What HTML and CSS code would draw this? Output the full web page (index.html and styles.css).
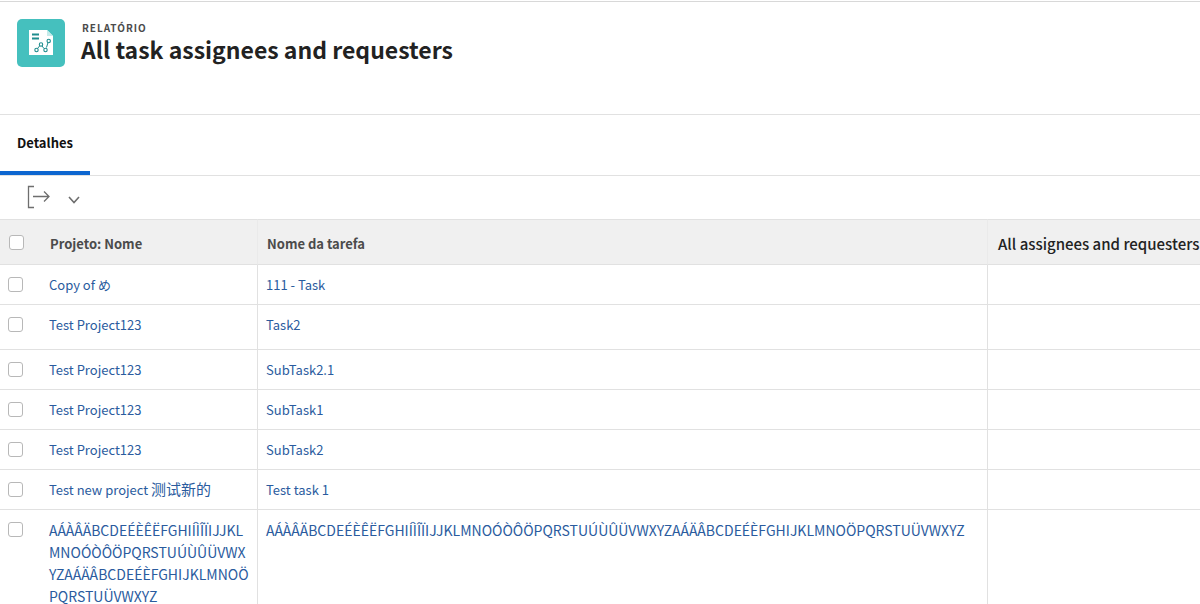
FILE: index.html
```html
<!DOCTYPE html>
<html lang="pt">
<head>
<meta charset="utf-8">
<meta name="viewport" content="width=device-width, initial-scale=1">
<title>All task assignees and requesters</title>
<link rel="stylesheet" href="styles.css">
</head>
<body>
<header class="page-header">
  <svg class="report-icon" viewBox="0 0 48 48" aria-hidden="true">
    <rect width="48" height="48" rx="5" fill="#45c0be"/>
    <path d="M12 11h18l6 6v19H12z" fill="#fff"/>
    <path d="M30 11l6 6h-6z" fill="#c5ebea"/>
    <path d="M15 15.500h7M15 19.500h7" stroke="#1f8c8e" stroke-width="2"/>
    <path d="M20.500 29.500l2.500-3M25 27l2 2.500M29.500 28.500l1.500-5" stroke="#1f8c8e" fill="none"/>
    <g fill="#fff" stroke="#1f8c8e" stroke-width="1.100"><circle cx="19.500" cy="31" r="1.700"/><circle cx="24" cy="25.500" r="1.700"/><circle cx="28.500" cy="31" r="1.700"/><circle cx="31.700" cy="22" r="1.700"/></g>
  </svg>
  <div class="heading">
    <p class="kind">RELATÓRIO</p>
    <h1 class="title">All task assignees and requesters</h1>
  </div>
</header>
<nav class="tabs"><a class="tab" href="#details" aria-current="page">Detalhes</a></nav>
<main id="details">
  <div class="toolbar">
    <button class="export" type="button" aria-label="Exportar">
      <svg class="export-icon" viewBox="0 0 24 24" aria-hidden="true"><path d="M7 1.500H1.500v21H7M6 11.500h16M17 6.500l5 5-5 5"/></svg>
      <svg class="chevron" viewBox="0 0 12 8" aria-hidden="true"><path d="M1 1l5 5.500 5-5.500"/></svg>
    </button>
  </div>
  <div class="table-wrap">
  <table class="report">
    <colgroup><col class="col-check"><col class="col-project"><col class="col-task"><col class="col-people"></colgroup>
    <thead><tr><th><input type="checkbox" aria-label="Selecionar tudo"></th><th>Projeto: Nome</th><th>Nome da tarefa</th><th class="people">All assignees and requesters</th></tr></thead>
    <tbody>
      <tr><td><input type="checkbox" aria-label="111 - Task"></td><td><a href="#p1">Copy of め</a></td><td><a href="#t1">111 - Task</a></td><td></td></tr>
      <tr class="tall"><td><input type="checkbox" aria-label="Task2"></td><td><a href="#p2">Test Project123</a></td><td><a href="#t2">Task2</a></td><td></td></tr>
      <tr><td><input type="checkbox" aria-label="SubTask2.1"></td><td><a href="#p2">Test Project123</a></td><td><a href="#t3">SubTask2.1</a></td><td></td></tr>
      <tr><td><input type="checkbox" aria-label="SubTask1"></td><td><a href="#p2">Test Project123</a></td><td><a href="#t4">SubTask1</a></td><td></td></tr>
      <tr><td><input type="checkbox" aria-label="SubTask2"></td><td><a href="#p2">Test Project123</a></td><td><a href="#t5">SubTask2</a></td><td></td></tr>
      <tr><td><input type="checkbox" aria-label="Test task 1"></td><td><a href="#p3">Test new project <span class="han" lang="zh-Hans">测试新的</span></a></td><td><a href="#t6">Test task 1</a></td><td></td></tr>
      <tr class="long"><td><input type="checkbox" aria-label="AÁÀÂÄ"></td><td><a href="#p4">AÁÀÂÄBCDEÉÈÊËFGHIÍÌÎÏIJJKLMNOÓÒÔÖPQRSTUÚÙÛÜVWXYZAÁÄÂBCDEÉÈFGHIJKLMNOÖPQRSTUÜVWXYZ</a></td><td><a href="#t7">AÁÀÂÄBCDEÉÈÊËFGHIÍÌÎÏIJJKLMNOÓÒÔÖPQRSTUÚÙÛÜVWXYZAÁÄÂBCDEÉÈFGHIJKLMNOÖPQRSTUÜVWXYZ</a></td><td></td></tr>
    </tbody>
  </table>
  </div>
</main>
</body>
</html>
```

FILE: styles.css
```css
* { box-sizing: border-box; }
html { height: 100%; overflow: hidden; }
body {
  margin: 0;
  background: #fff;
  color: #222;
  font: 13px/22px "Noto Sans CJK JP", "Noto Sans", sans-serif;
}
.page-header {
  display: flex;
  gap: 16px;
  padding: 17px 17px 47px;
  border-top: 1px solid #d8d8d8;
  margin-top: 1px;
  border-bottom: 1px solid #e1e1e1;
}
.report-icon { width: 48px; height: 48px; flex: none; }
.kind {
  margin: 0;
  padding-left: 1px;
  color: #4b4b4b;
  font-size: 10px;
  font-weight: 700;
  line-height: 17px;
  letter-spacing: 1px;
}
.title { margin: 0; font-size: 23px; font-weight: 700; line-height: 26px; }
.tabs { display: flex; border-bottom: 1px solid #e1e1e1; }
.tab {
  padding: 17px 17px 17px;
  border-bottom: 4px solid #0d66d0;
  color: #111;
  font-weight: 700;
  text-decoration: none;
}
.toolbar { padding: 9px 27px 10px; }
.export {
  display: flex;
  align-items: center;
  gap: 17px;
  padding: 0;
  border: 0;
  background: none;
}
.export svg { fill: none; stroke: #6e6e6e; stroke-width: 1.3; }
.export-icon { width: 24px; height: 24px; }
.export .chevron { width: 12px; height: 8px; margin-top: 6px; stroke-width: 1.6; }
.table-wrap { overflow: hidden; }
.report { width: 100%; table-layout: fixed; border-collapse: separate; border-spacing: 0; }
.col-check { width: 41px; }
.col-project { width: 216px; }
.col-task { width: 730px; }
th, td { padding: 9px 8px 8px; border-bottom: 1px solid #e1e1e1; text-align: left; vertical-align: top; }
td { height: 40px; }
.tall td { height: 45px; }
th {
  padding: 13px 9px 9px;
  background: #f0f0f0;
  border-top: 1px solid #e1e1e1;
  color: #4b4b4b;
  font-weight: 700;
}
th.people { padding-left: 10px; color: #222; font-size: 15px; font-weight: 500; white-space: nowrap; }
td:nth-child(n+3) { border-left: 1px solid #e1e1e1; }
th:nth-child(n+3) { border-left: 1px solid #eaeaea; }
td a { color: #2a5b9e; text-decoration: none; overflow-wrap: anywhere; }
.long { font-size: 14px; }
.han { font-family: "Noto Sans CJK SC", sans-serif; font-size: 15px; line-height: 16px; }
input[type="checkbox"] {
  display: block;
  appearance: none;
  width: 15px;
  height: 15px;
  margin: 3px 0 0;
  border: 1px solid #b8b8b8;
  border-radius: 3px;
  background: #fff;
}
th input[type="checkbox"] { margin-top: 2px; }
input[type="checkbox"]:checked { background: #0d66d0; }
```
